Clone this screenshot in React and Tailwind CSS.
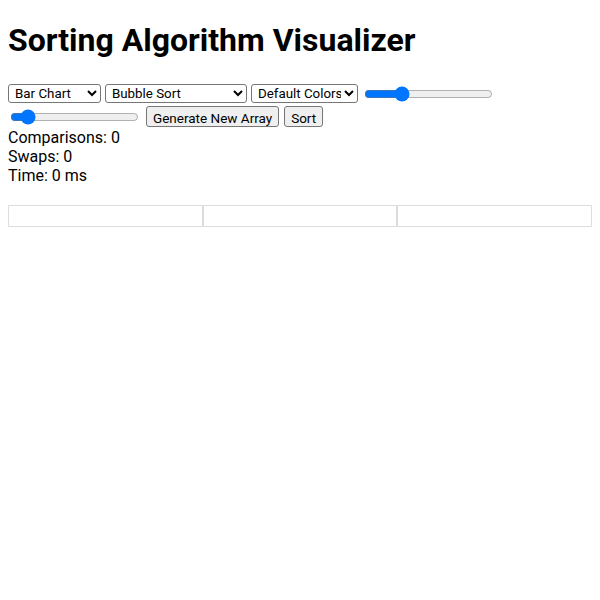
import { useState } from 'react';

const selectCls =
  "h-[19px] border border-[#767676] rounded-[3px] bg-white text-[13.33px] pl-[2px] text-black align-middle";
const buttonCls =
  "h-[21px] border border-[#767676] rounded-[3px] bg-[#efefef] text-[13.5px] px-[6px] text-black align-middle";

function App() {
  const [size, setSize] = useState(30);
  const [speed, setSpeed] = useState(10);

  return (
    <div className="px-2 text-black bg-white min-h-[600px]" style={{ fontFamily: 'Roboto, "Liberation Sans", sans-serif' }}>
      <h1 className="text-[32px] font-bold pt-[22px] mb-[18px] leading-[37px]">Sorting Algorithm Visualizer</h1>

      <div className="pt-[4px]">
        <div className="leading-[23px] mb-[2px]">
          <select className={`${selectCls} w-[93px]`} defaultValue="bar">
            <option value="bar">Bar Chart</option>
            <option value="scatter">Scatter Plot</option>
          </select>{" "}
          <select className={`${selectCls} w-[142px]`} defaultValue="bubble">
            <option value="bubble">Bubble Sort</option>
            <option value="quick">Quick Sort</option>
            <option value="merge">Merge Sort</option>
          </select>{" "}
          <select className={`${selectCls} w-[107px]`} defaultValue="default">
            <option value="default">Default Colors</option>
            <option value="rainbow">Rainbow</option>
          </select>{" "}
          <input
            type="range"
            min="5"
            max="100"
            value={size}
            onChange={(e) => setSize(e.target.value)}
            className="w-[129px] mx-[2px] align-middle"
          />
        </div>
        <div className="leading-[23px] flex items-center gap-[5px]">
          <input
            type="range"
            min="1"
            max="100"
            value={speed}
            onChange={(e) => setSpeed(e.target.value)}
            className="w-[129px] mx-[2px]"
          />
          <button className={buttonCls}>Generate New Array</button>
          <button className={buttonCls}>Sort</button>
        </div>
      </div>

      <div className="text-[16px] leading-[19px] mt-[1px]">
        <div>Comparisons: 0</div>
        <div>Swaps: 0</div>
        <div>Time: 0 ms</div>
      </div>

      <div className="flex mt-[20px]">
        <div className="flex-1 h-[22px] border border-[#dddddd]"></div>
        <div className="flex-1 h-[22px] border border-[#dddddd]"></div>
        <div className="flex-1 h-[22px] border border-[#dddddd]"></div>
      </div>
    </div>
  );
}

export default App;
